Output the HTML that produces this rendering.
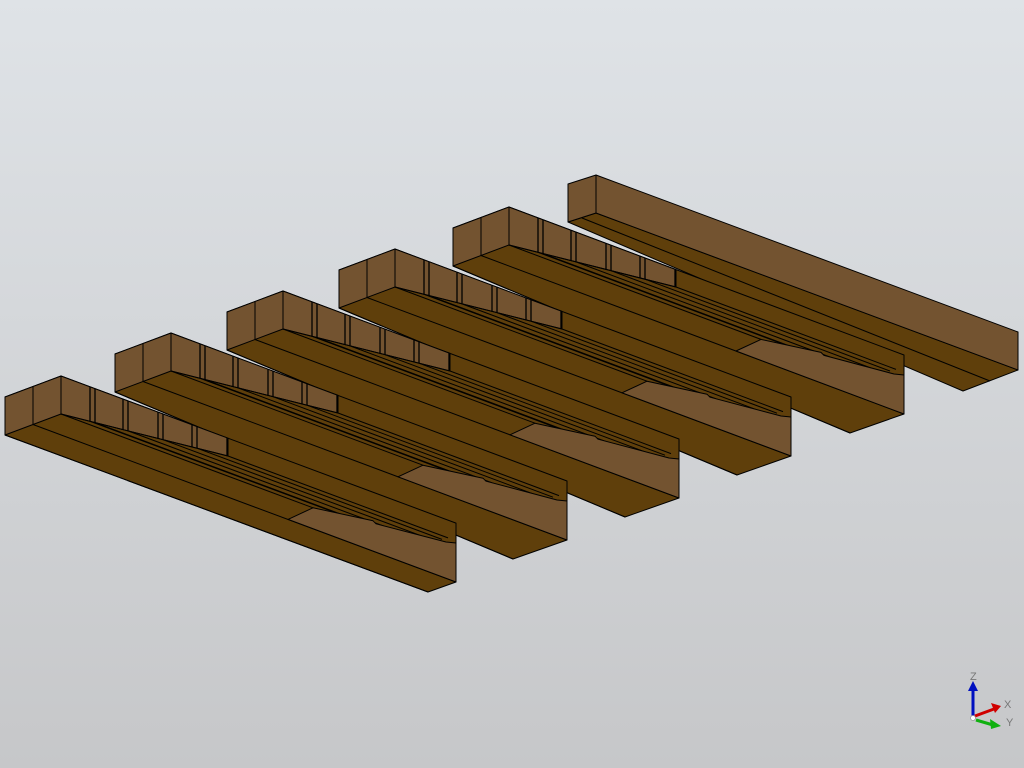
<!DOCTYPE html>
<html><head><meta charset="utf-8">
<style>
html,body{margin:0;padding:0;width:1024px;height:768px;overflow:hidden}
body{background:linear-gradient(#dfe3e7,#c6c7c9)}
svg{position:absolute;left:0;top:0}
.t{font-family:"Liberation Sans",sans-serif;font-size:11px;fill:#777}
</style></head><body>
<svg id="s" width="1024" height="768" xmlns="http://www.w3.org/2000/svg">
<g id="g" stroke="#000" stroke-width="1" stroke-linejoin="round"></g>
<g>
<line x1="973" y1="717" x2="973" y2="690" stroke="#0010c0" stroke-width="3"/>
<polygon points="968,691 978,691 973,681" fill="#0010c0"/>
<line x1="975" y1="716" x2="994" y2="709" stroke="#d00000" stroke-width="3"/>
<polygon points="991,703 1001,706 995,713" fill="#d00000"/>
<line x1="976" y1="720" x2="993" y2="725" stroke="#10b010" stroke-width="3"/>
<polygon points="990,719 1001,726 991,729" fill="#10b010"/>
<circle cx="973" cy="718" r="2.5" fill="#fff" stroke="#999" stroke-width="0.8"/>
<text class="t" x="970" y="680">Z</text>
<text class="t" x="1004" y="708">X</text>
<text class="t" x="1006" y="726">Y</text>
</g>
</svg>
<script>
var D="#5f3f0b",L="#735330",g=document.getElementById('g'),out="";
function P(pts,f){out+='<polygon points="'+pts.map(function(p){return p[0].toFixed(1)+','+p[1].toFixed(1)}).join(' ')+'" fill="'+f+'"/>';}
function Ln(a,b,w){out+='<line x1="'+a[0].toFixed(1)+'" y1="'+a[1].toFixed(1)+'" x2="'+b[0].toFixed(1)+'" y2="'+b[1].toFixed(1)+'"'+(w?' stroke-width="'+w+'"':'')+'/>';}
// beam 6 (back)
P([[568,222],[596,213],[1018,370],[963,391]],D);
P([[596,175],[1018,332],[1018,370],[596,213]],L);
P([[568,184],[596,175],[596,213],[568,222]],L);
Ln([582,218],[990,381]);
var A=[[5,397],[115,354],[227,312],[339,270],[453,228]],E=[456,567,679,791,904],FY=[582,540,498,456,414];
for(var k=4;k>=0;k--){
 var ax=A[k][0],ay=A[k][1],e=E[k],fcy=FY[k];
 var NA=[ax,ay],NB=[ax+56,ay-21],NC=[ax+56,ay+17],ND=[ax,ay+38],NM=[ax+28,ay+27.5];
 var FC=[e,fcy],FT=[e,fcy-39],FD=k==0?[e-28,fcy+10]:[e-54,fcy+19];
 var s=(FC[1]-NM[1])/(FC[0]-NM[0]);
 var Q=[e,NB[1]+(e-NB[0])*s];
 P([ND,NA,NB,Q,FT,FC,FD],D);
 // posts / back wall
 var x0=ax+56,x1=ax+223;
 function top(x){return NB[1]+(x-NB[0])*s;}
 function bot(x){return ay+17+(x-x0)*(42/167);}
 P([[x0,top(x0)],[x1,top(x1)],[x1,bot(x1)],[x0,bot(x0)]],L);
 [85,90,118,123,153,158,187,192,222].forEach(function(o){var x=ax+o;Ln([x,top(x)],[x,bot(x)],1.3);});
 Ln([x0,bot(x0)],[x1,bot(x1)]);
 // stripes
 [85,90,123,158,192,223].forEach(function(o,i){var x=ax+o,y=bot(x);var ex=e-8-(5-i)*6;Ln([x,y],[ex,y+(ex-x)*s]);});
 var LB=[ax+283,NM[1]+(255)*s],LT=[ax+308,NC[1]+(252)*s];
 Ln(NC,LT);Ln(NM,FC);Ln(ND,FD);
 P([LB,LT,[LT[0]+60,LT[1]+13],[LT[0]+63,LT[1]+16],[e-10,FT[1]-1],FT,FC],L);
 P([NA,NB,NC,ND],L);
 Ln([ax+28,ay-10.5],NM);
}
g.innerHTML=out;
</script>
</body></html>
